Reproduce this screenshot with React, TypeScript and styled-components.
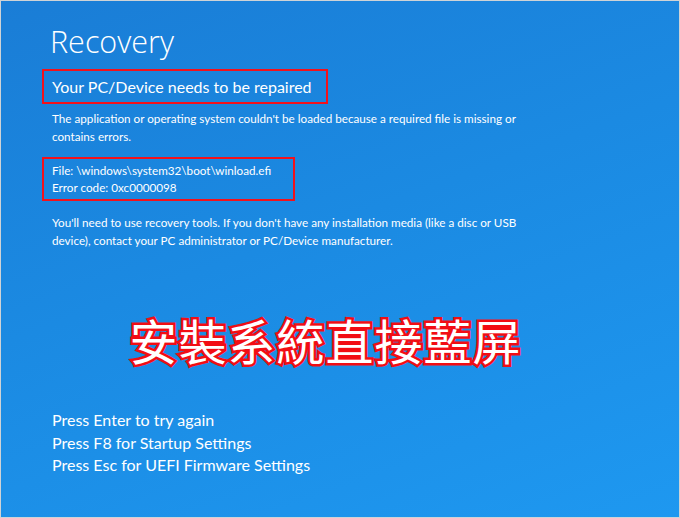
import React from "react";
import styled, { createGlobalStyle } from "styled-components";

const GlobalStyle = createGlobalStyle`
  html, body {
    margin: 0;
    padding: 0;
  }
  body {
    width: 680px;
    height: 518px;
    overflow: hidden;
  }
`;

const Screen = styled.div`
  box-sizing: border-box;
  width: 680px;
  height: 518px;
  border: 1px solid #cfd3d6;
  background: linear-gradient(160deg, #1a7dd6 0%, #1b8ae2 45%, #1e98f0 100%);
  color: #ffffff;
  font-family: Lato, "Open Sans", sans-serif;
  padding: 18px 0 0 51px;
  display: flex;
  flex-direction: column;
`;

const Title = styled.h1`
  margin: 0 0 0 -2px;
  font-family: "Open Sans", sans-serif;
  font-weight: 300;
  font-size: 30.5px;
  line-height: 44px;
`;

const Framed = styled.div<{ $width: number; $gap: number; $pad?: string }>`
  box-sizing: border-box;
  width: ${({ $width }) => $width}px;
  margin: ${({ $gap }) => $gap}px 0 0 -10px;
  border: 2px solid #f3111b;
  padding: ${({ $pad }) => $pad ?? "0 8px"};
`;

const Heading = styled.div`
  font-size: 16px;
  line-height: 31px;
  white-space: nowrap;
`;

const Paragraph = styled.p<{ $gap?: number }>`
  margin: ${({ $gap }) => $gap ?? 0}px 0 0;
  font-size: 11.7px;
  line-height: 18px;
  white-space: nowrap;
`;

const CodeLine = styled.p`
  margin: 0;
  font-size: 11.7px;
  line-height: 17px;
  white-space: nowrap;
`;

const Banner = styled.div`
  align-self: center;
  margin: 62px 0 0 -80px;
  font-family: "Noto Sans CJK TC", "Noto Sans CJK SC", sans-serif;
  font-weight: 400;
  font-size: 48px;
  line-height: 56px;
  letter-spacing: 1px;
  color: #ffffff;
  -webkit-text-stroke: 5px #f20d14;
  paint-order: stroke fill;
`;

const Options = styled.div`
  margin-top: 42px;
  display: flex;
  flex-direction: column;
  font-size: 16px;
  line-height: 22.5px;
`;

export default function App() {
  return (
    <>
      <GlobalStyle />
      <Screen>
        <Title>Recovery</Title>
        <Framed $width={286} $gap={6}>
          <Heading>Your PC/Device needs to be repaired</Heading>
        </Framed>
        <Paragraph $gap={5}>
          The application or operating system couldn't be loaded because a required file is missing or
          <br />
          contains errors.
        </Paragraph>
        <Framed $width={253} $gap={12} $pad="3px 8px">
          <CodeLine>File: \windows\system32\boot\winload.efi</CodeLine>
          <CodeLine>Error code: 0xc0000098</CodeLine>
        </Framed>
        <Paragraph $gap={12}>
          You'll need to use recovery tools. If you don't have any installation media (like a disc or USB
          <br />
          device), contact your PC administrator or PC/Device manufacturer.
        </Paragraph>
        <Banner>安裝系統直接藍屏</Banner>
        <Options>
          <span>Press Enter to try again</span>
          <span>Press F8 for Startup Settings</span>
          <span>Press Esc for UEFI Firmware Settings</span>
        </Options>
      </Screen>
    </>
  );
}
